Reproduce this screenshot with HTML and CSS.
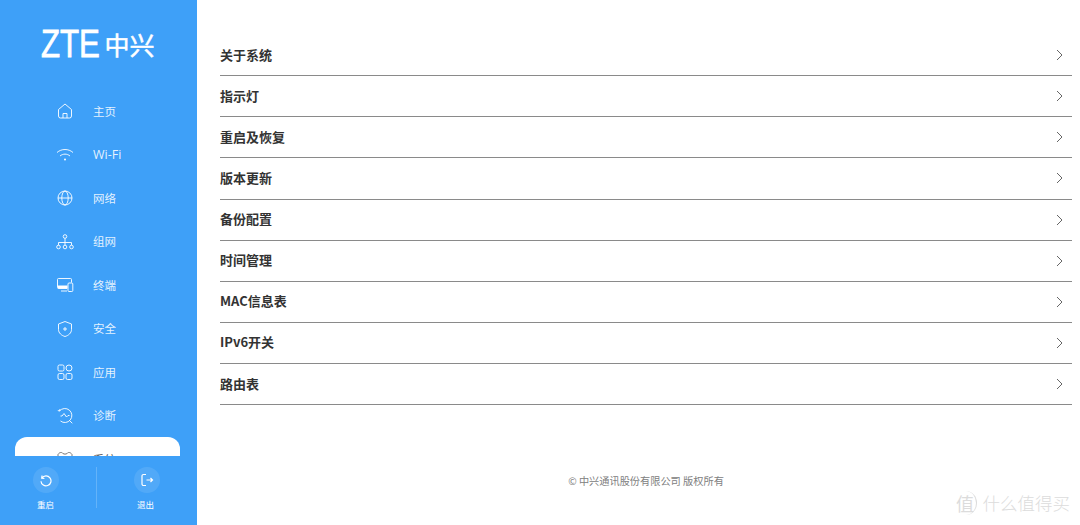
FILE: index.html
```html
<!DOCTYPE html>
<html lang="zh-CN">
<head>
<meta charset="utf-8">
<title>ZTE 中兴</title>
<link rel="stylesheet" href="styles.css">
</head>
<body>
<div class="app">
  <aside class="sidebar">
    <div class="logo">
      <svg class="logo-svg" viewBox="0 0 114 30" width="114" height="30">
        <text class="logo-latin" transform="translate(0 28) scale(.8 1)">ZTE</text>
        <text class="logo-cjk" transform="translate(63.500 26) scale(1 1)">中兴</text>
      </svg>
    </div>
    <nav class="nav">
      <a class="nav-item"><svg class="nav-icon" viewBox="0 0 18 18"><path d="M2.500 7.500 9 2l6.500 5.500V14a2 2 0 0 1-2 2h-9a2 2 0 0 1-2-2zM7 16v-4.500h4V16"/></svg><span>主页</span></a>
      <a class="nav-item"><svg class="nav-icon" viewBox="0 0 18 18"><path d="M1 6.500c4.500-4 11.500-4 16 0M4 10c3-2.500 7-2.500 10 0"/><circle class="dot" cx="9" cy="13.500" r="1"/></svg><span class="nav-latin">Wi-Fi</span></a>
      <a class="nav-item"><svg class="nav-icon" viewBox="0 0 18 18"><circle cx="9" cy="9" r="7"/><ellipse cx="9" cy="9" rx="3.200" ry="7"/><path d="M2 9h14"/></svg><span>网络</span></a>
      <a class="nav-item"><svg class="nav-icon" viewBox="0 0 18 18"><circle cx="9" cy="3.500" r="1.800"/><circle cx="2.500" cy="14" r="1.800"/><circle cx="9" cy="14" r="1.800"/><circle cx="15.500" cy="14" r="1.800"/><path d="M9 5.300v6.900M2.500 12.200V9.500h13v2.700"/></svg><span>组网</span></a>
      <a class="nav-item"><svg class="nav-icon" viewBox="0 0 18 18"><path d="M11 12.500H2.500a1 1 0 0 1-1-1V3.500a1 1 0 0 1 1-1h12a1 1 0 0 1 1 1v3"/><path class="fill" d="M2 9.500h9.500v3H2z"/><rect x="12" y="7" width="4.800" height="8.500" rx="1"/><path d="M5 15h6"/></svg><span>终端</span></a>
      <a class="nav-item"><svg class="nav-icon" viewBox="0 0 18 18"><path d="M9 1.500 15.500 4v5.500c0 3.500-3 6-6.500 7-3.500-1-6.500-3.500-6.500-7V4zM7 9h4M9 7v4"/></svg><span>安全</span></a>
      <a class="nav-item"><svg class="nav-icon" viewBox="0 0 18 18"><rect x="2" y="2" width="6" height="6" rx="1.500"/><circle cx="13" cy="5" r="3"/><rect x="2" y="10.500" width="6" height="6" rx="1.500"/><rect x="10" y="10.500" width="6" height="6" rx="1.500"/></svg><span>应用</span></a>
      <a class="nav-item"><svg class="nav-icon" viewBox="0 0 18 18"><path d="M3.500 4A7 7 0 1 1 4.500 14M1.800 3.500l1.700.5.500-2M4.500 9H6l2-2.500L10.500 10 12 8.500h1.500M13.500 13.500l2.800 2.800"/></svg><span>诊断</span></a>
      <a class="nav-item is-active"><svg class="nav-icon" viewBox="0 0 18 18"><path d="M2 4.500c1.500-2.500 4-2.500 5-1 1 .8 3 .8 4 0 1-1.500 3.500-1.500 5 1v6c0 3-3 5-7 5s-7-2-7-5z"/></svg><span>系统</span></a>
    </nav>
    <div class="actions">
      <button class="action action-left"><span class="action-circle"><svg class="action-icon" viewBox="0 0 14 14"><path d="M3 2.500 2.700 5.200 5.400 5.500M2.900 5A5 5 0 1 1 2 8.200"/></svg></span><span class="action-label">重启</span></button>
      <button class="action action-right"><span class="action-circle"><svg class="action-icon" viewBox="0 0 14 14"><path d="M6 1.500H3.500a1.500 1.500 0 0 0-1.500 1.500v8a1.500 1.500 0 0 0 1.500 1.500H6M6.500 7h6M10.500 5l2 2-2 2"/></svg></span><span class="action-label">退出</span></button>
    </div>
  </aside>
  <main class="main">
    <ul class="menu">
      <li class="menu-row"><span>关于系统</span><svg class="chevron" viewBox="0 0 7 12"><path d="M1 1l5 5-5 5"/></svg></li>
      <li class="menu-row"><span>指示灯</span><svg class="chevron" viewBox="0 0 7 12"><path d="M1 1l5 5-5 5"/></svg></li>
      <li class="menu-row"><span>重启及恢复</span><svg class="chevron" viewBox="0 0 7 12"><path d="M1 1l5 5-5 5"/></svg></li>
      <li class="menu-row"><span>版本更新</span><svg class="chevron" viewBox="0 0 7 12"><path d="M1 1l5 5-5 5"/></svg></li>
      <li class="menu-row"><span>备份配置</span><svg class="chevron" viewBox="0 0 7 12"><path d="M1 1l5 5-5 5"/></svg></li>
      <li class="menu-row"><span>时间管理</span><svg class="chevron" viewBox="0 0 7 12"><path d="M1 1l5 5-5 5"/></svg></li>
      <li class="menu-row"><span>MAC信息表</span><svg class="chevron" viewBox="0 0 7 12"><path d="M1 1l5 5-5 5"/></svg></li>
      <li class="menu-row"><span>IPv6开关</span><svg class="chevron" viewBox="0 0 7 12"><path d="M1 1l5 5-5 5"/></svg></li>
      <li class="menu-row"><span>路由表</span><svg class="chevron" viewBox="0 0 7 12"><path d="M1 1l5 5-5 5"/></svg></li>
    </ul>
    <footer class="copyright">© 中兴通讯股份有限公司 版权所有</footer>
  </main>
  <div class="watermark"><span class="watermark-badge">值</span><span class="watermark-text">什么值得买</span></div>
</div>
</body>
</html>
```
FILE: styles.css
```css
* { box-sizing: border-box; }
html, body { margin: 0; height: 100%; overflow: hidden; }
body {
  background: #fff;
  font-family: "Noto Sans CJK SC", "Open Sans", sans-serif;
}
.app { position: relative; display: flex; width: 1080px; height: 525px; }

.sidebar {
  display: flex;
  flex-direction: column;
  flex: 0 0 197px;
  height: 525px;
  background: #3ea0f8;
  color: #fff;
}
.logo {
  flex: 0 0 89.25px;
  padding: 29px 0 0 41px;
}
.logo-svg { display: block; overflow: visible; }
.logo-latin {
  font-family: "Liberation Sans", sans-serif;
  font-size: 39px;
  fill: #fff;
  stroke: #fff;
  stroke-width: .8;
}
.logo-cjk {
  font-family: "Noto Sans CJK SC", sans-serif;
  font-size: 25px;
  fill: #fff;
  stroke: #fff;
  stroke-width: .5;
}

.nav { flex: 1; min-height: 0; overflow: hidden; }
.nav-item {
  display: flex;
  align-items: center;
  height: 43.5px;
  margin: 0 17px 0 15px;
  padding-left: 41px;
  gap: 19px;
  font-family: "Open Sans", "Noto Sans CJK SC", sans-serif;
  font-size: 11.5px;
  color: rgba(255, 255, 255, .88);
}
.nav-item span { position: relative; top: -.5px; }
.nav-item .nav-latin { font-size: 12.5px; }
.nav-icon {
  flex: 0 0 18px;
  width: 18px;
  height: 18px;
  fill: none;
  stroke: rgba(255, 255, 255, .9);
  stroke-width: 1;
}
.nav-icon .dot, .nav-icon .fill { fill: #fff; stroke: none; }
.nav-item.is-active {
  background: #fff;
  border-radius: 12px 12px 0 0;
  color: #555;
}
.is-active .nav-icon { stroke: #777; }

.actions {
  display: grid;
  grid-template-columns: 97px 100px;
  flex: 0 0 69px;
  padding-top: 11px;
}
.action {
  display: flex;
  flex-direction: column;
  align-items: center;
  height: 41px;
  padding: 0;
  border: 0;
  background: none;
  color: #fff;
  font-family: inherit;
}
.action-left { padding-right: 5px; border-right: 1px solid rgba(255, 255, 255, .2); }
.action-circle {
  display: flex;
  flex: none;
  align-items: center;
  justify-content: center;
  width: 26px;
  height: 26px;
  border-radius: 50%;
  background: rgba(255, 255, 255, .1);
}
.action-icon { width: 14px; height: 14px; fill: none; stroke: #fff; stroke-width: 1.2; }
.action-label { flex: none; margin-top: 5px; font-size: 8.5px; line-height: 12px; }
.action-right .action-label { margin-right: 3px; }

.main {
  display: flex;
  flex-direction: column;
  flex: 1;
  min-width: 0;
  padding: 35px 8px 0 23px;
}
.menu { margin: 0; padding: 0; list-style: none; }
.menu-row {
  display: flex;
  align-items: center;
  justify-content: space-between;
  height: 41.125px;
  padding-right: 9px;
  border-bottom: 1px solid #8a8a8a;
  font-size: 13px;
  font-weight: 700;
  color: #333;
}
.menu-row span { margin-bottom: 2px; }
.chevron { width: 7px; height: 12px; fill: none; stroke: #666; stroke-width: 1; }
.copyright {
  margin-top: 68px;
  font-size: 10.200px;
  line-height: 16px;
  text-align: center;
  color: #808080;
}

.watermark {
  position: absolute;
  right: 10px;
  top: 490px;
  display: flex;
  align-items: center;
  gap: 6px;
  color: #dcdcdc;
}
.watermark-badge {
  display: flex;
  align-items: center;
  justify-content: center;
  width: 22px;
  height: 24px;
  border-right: 1px solid #dcdcdc;
  border-radius: 50%;
  font-size: 18px;
}
.watermark-text { font-size: 17.500px; line-height: 26px; font-weight: 300; }
```
